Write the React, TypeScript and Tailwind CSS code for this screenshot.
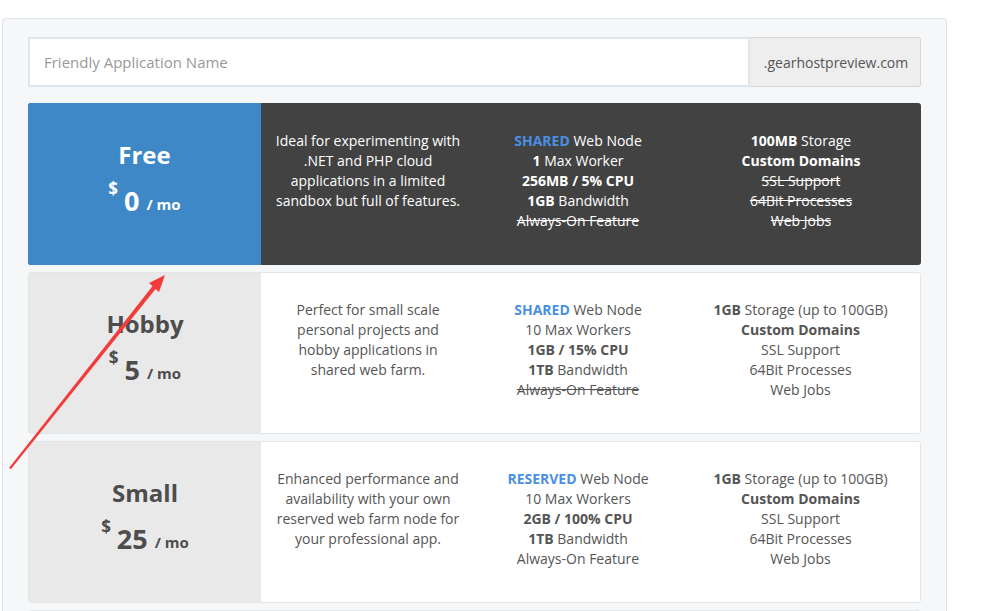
import React from "react";

type Plan = {
  name: string;
  price: string;
  desc: string;
  col1: React.ReactNode[];
  col2: React.ReactNode[];
  selected?: boolean;
};

const B = ({ children }: { children: React.ReactNode }) => <span className="font-bold">{children}</span>;
const Blue = ({ children }: { children: React.ReactNode }) => (
  <span className="font-bold text-[#4a90e2]">{children}</span>
);
const S = ({ children }: { children: React.ReactNode }) => <span className="line-through">{children}</span>;

const plans: Plan[] = [
  {
    name: "Free",
    price: "0",
    desc: "Ideal for experimenting with .NET and PHP cloud applications in a limited sandbox but full of features.",
    selected: true,
    col1: [
      <><Blue>SHARED</Blue> Web Node</>,
      <><B>1</B> Max Worker</>,
      <B>256MB / 5% CPU</B>,
      <><B>1GB</B> Bandwidth</>,
      <S>Always-On Feature</S>,
    ],
    col2: [
      <><B>100MB</B> Storage</>,
      <B>Custom Domains</B>,
      <S>SSL Support</S>,
      <S>64Bit Processes</S>,
      <S>Web Jobs</S>,
    ],
  },
  {
    name: "Hobby",
    price: "5",
    desc: "Perfect for small scale personal projects and hobby applications in shared web farm.",
    col1: [
      <><Blue>SHARED</Blue> Web Node</>,
      <>10 Max Workers</>,
      <B>1GB / 15% CPU</B>,
      <><B>1TB</B> Bandwidth</>,
      <S>Always-On Feature</S>,
    ],
    col2: [
      <><B>1GB</B> Storage (up to 100GB)</>,
      <B>Custom Domains</B>,
      <>SSL Support</>,
      <>64Bit Processes</>,
      <>Web Jobs</>,
    ],
  },
  {
    name: "Small",
    price: "25",
    desc: "Enhanced performance and availability with your own reserved web farm node for your professional app.",
    col1: [
      <><Blue>RESERVED</Blue> Web Node</>,
      <>10 Max Workers</>,
      <B>2GB / 100% CPU</B>,
      <><B>1TB</B> Bandwidth</>,
      <>Always-On Feature</>,
    ],
    col2: [
      <><B>1GB</B> Storage (up to 100GB)</>,
      <B>Custom Domains</B>,
      <>SSL Support</>,
      <>64Bit Processes</>,
      <>Web Jobs</>,
    ],
  },
];

function PlanCard({ p }: { p: Plan }) {
  const sel = !!p.selected;
  return (
    <div
      className={
        "flex h-[162px] shrink-0 overflow-hidden rounded-[3px] " +
        (sel ? "bg-[#424242] text-white" : "border border-[#e4e5e7] bg-white text-[#555555]")
      }
    >
      <div
        className={
          "flex shrink-0 flex-col items-center " +
          (sel ? "w-[233px] pt-[37px] bg-[#3f88c8] text-white" : "w-[232px] pt-[36px] bg-[#e9e9e9] text-[#4d4d4d]")
        }
      >
        <div className="text-[24px] font-bold leading-[30px]">{p.name}</div>
        <div className="mt-[10px] flex items-start leading-none">
          <span className="mt-[0px] text-[17px] font-bold">$</span>
          <span className="ml-[6px] mt-[7px] text-[27px] font-bold">{p.price}</span>
          <span className="ml-[7px] mt-[17px] text-[15px] font-bold">/ mo</span>
        </div>
      </div>
      <div className={"flex flex-1 text-[14px] leading-[20px] " + (sel ? "pt-[28px]" : "pt-[27px]")}>
        <div className="flex w-[214px] shrink-0 justify-center">
          <div className="w-[185px] text-center">{p.desc}</div>
        </div>
        <div className="w-[206px] shrink-0 text-center whitespace-nowrap">
          {p.col1.map((c, i) => (
            <div key={i}>{c}</div>
          ))}
        </div>
        <div className="flex-1 text-center whitespace-nowrap">
          {p.col2.map((c, i) => (
            <div key={i}>{c}</div>
          ))}
        </div>
      </div>
    </div>
  );
}

export default function App() {
  return (
    <div
      className="relative h-[611px] w-[983px] overflow-hidden bg-white"
      style={{ fontFamily: '"Open Sans", "Liberation Sans", sans-serif' }}
    >
      <div className="ml-[2px] mt-[18px] h-[640px] w-[945px] rounded-[3px] border border-[#dfe2e7] bg-[#f6f7f9] px-[25px] pt-[18px]">
        <div className="flex h-[50px]">
          <div className="flex flex-1 items-center border-2 border-[#dde5ed] bg-white pl-[14px] text-[15px] text-[#999999]">
            Friendly Application Name
          </div>
          <div className="flex w-[171px] items-center justify-center rounded-r-[3px] border border-l-0 border-[#d6d6d6] bg-[#eeeeee] pl-[2px] text-[14px] text-[#555555]">
            .gearhostpreview.com
          </div>
        </div>
        <div className="mt-[16px] flex flex-col gap-[7px]">
          {plans.map((p) => (
            <PlanCard key={p.name} p={p} />
          ))}
          <div className="flex h-[162px] shrink-0 overflow-hidden rounded-[3px] border border-[#e4e5e7] bg-white">
            <div className="w-[232px] shrink-0 bg-[#e9e9e9]" />
            <div className="flex-1" />
          </div>
        </div>
      </div>
      <svg className="pointer-events-none absolute left-0 top-0" width="983" height="611">
        <polygon points="9,468 11,469 158,286 155,283" fill="#f23b3b" />
        <polygon points="165,275 149,283 159,292" fill="#f23b3b" />
      </svg>
    </div>
  );
}
